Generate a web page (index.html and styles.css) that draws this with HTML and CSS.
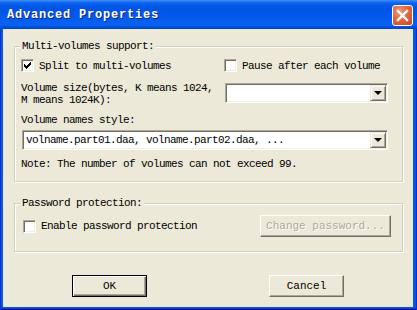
FILE: index.html
```html
<!DOCTYPE html>
<html lang="en">
<head>
    <meta charset="UTF-8">
    <title>Advanced Properties</title>
    <link rel="stylesheet" href="styles.css">
</head>
<body>
    <div class="window">
        <div class="titlebar">
            <span class="title">Advanced Properties</span>
            <span class="close">
                <svg width="19" height="19" viewBox="0 0 19 19">
                    <path d="M5 5 L14 14 M14 5 L5 14" stroke="#fff" stroke-width="2.4" stroke-linecap="square"/>
                </svg>
            </span>
        </div>
        <div class="frame">
            <div class="client">
                <div class="group group-volumes">
                    <span class="legend">Multi-volumes support:</span>
                    <div class="row-checks">
                        <label class="check">
                            <span class="box">
                                <svg width="7" height="7" viewBox="0 0 7 7" shape-rendering="crispEdges">
                                    <path d="M6 0h1v3h-1v1h-1v1h-1v1h-1v1h-1v-1h-1v-1h-1v-3h1v1h1v1h1v-1h1v-1h1z" fill="#000"/>
                                </svg>
                            </span>
                            Split to multi-volumes
                        </label>
                        <label class="check">
                            <span class="box"></span>
                            Pause after each volume
                        </label>
                    </div>
                    <div class="row-size">
                        <div class="size-label">Volume size(bytes, K means 1024,<br>M means 1024K):</div>
                        <div class="combo combo-size">
                            <span class="combo-text"></span>
                            <span class="combo-btn"><i class="arrow"></i></span>
                        </div>
                    </div>
                    <div class="names-label">Volume names style:</div>
                    <div class="combo combo-names">
                        <span class="combo-text">volname.part01.daa, volname.part02.daa, ...</span>
                        <span class="combo-btn"><i class="arrow"></i></span>
                    </div>
                    <div class="note">Note: The number of volumes can not exceed 99.</div>
                </div>

                <div class="group group-password">
                    <span class="legend">Password protection:</span>
                    <div class="row-password">
                        <label class="check">
                            <span class="box"></span>
                            Enable password protection
                        </label>
                        <button class="btn btn-disabled" disabled>Change password...</button>
                    </div>
                </div>

                <div class="actions">
                    <button class="btn btn-default">OK</button>
                    <button class="btn">Cancel</button>
                </div>
            </div>
        </div>
    </div>
</body>
</html>
```

FILE: styles.css
```css
* {
    box-sizing: border-box;
}
body {
    margin: 0;
    width: 417px;
    height: 310px;
    overflow: hidden;
    font-family: "Liberation Mono", "DejaVu Sans Mono", monospace;
    font-size: 11px;
    letter-spacing: -0.6px;
    line-height: 12px;
    color: #000;
}
.window {
    width: 417px;
    height: 310px;
    display: flex;
    flex-direction: column;
}
.titlebar {
    height: 29px;
    flex: none;
    display: flex;
    align-items: center;
    justify-content: space-between;
    padding: 1px 4px 0 7px;
    background: linear-gradient(to bottom, #3d8ff7 0, #0c62ee 3px, #0055e5 8px, #0057e8 50%, #0a62f2 85%, #0052dd 93%, #0043c8 100%);
}
.title {
    color: #fff;
    font-weight: bold;
    font-size: 12px;
    letter-spacing: 0.8px;
    text-shadow: 1px 1px #0a1f8a;
}
.close {
    width: 21px;
    height: 21px;
    border: 1px solid #fff;
    border-radius: 3px;
    background: radial-gradient(circle at 35% 30%, #ec9a78 0, #e06a43 45%, #c8421b 100%);
    display: flex;
    align-items: center;
    justify-content: center;
}
.frame {
    flex: 1;
    display: flex;
    padding: 0 4px 3px 3px;
    background: #0655e8;
    box-shadow: inset 1px 0 #0733c9, inset -1px 0 #0733c9, inset 0 -1px #00138c, inset 0 -2px #0a3ed0;
}
.client {
    flex: 1;
    background: #ece9d8;
    padding: 17px 10px 0 11px;
    display: flex;
    flex-direction: column;
}
.group {
    position: relative;
    border: 1px solid #d0d0bf;
    box-shadow: inset 1px 1px #fff, 1px 1px #fff;
}
.legend {
    position: absolute;
    top: -7px;
    left: 5px;
    padding: 0 2px;
    background: #ece9d8;
}
.group-volumes {
    padding: 12px 13px 11px 6px;
}
.row-checks {
    display: grid;
    grid-template-columns: 203px auto;
}
.check {
    display: flex;
    align-items: center;
    gap: 5px;
    height: 13px;
}
.box {
    width: 13px;
    height: 13px;
    flex: none;
    background: #fff;
    border: 1px solid;
    border-color: #aca899 #fff #fff #aca899;
    box-shadow: inset 1px 1px #716f64, inset -1px -1px #f1efe2;
    display: flex;
    align-items: center;
    justify-content: center;
}
.row-size {
    display: flex;
    margin-top: 10px;
}
.size-label {
    width: 204px;
}
.combo {
    height: 20px;
    display: flex;
    align-items: center;
    background: #fff;
    border: 1px solid;
    border-color: #aca899 #fff #fff #aca899;
    box-shadow: inset 1px 1px #716f64, inset -1px -1px #f1efe2;
    padding: 1px;
}
.combo-size {
    margin-top: 1px;
    width: 163px;
}
.combo-names {
    margin: 4px 0 0 1px;
    width: 366px;
}
.combo-text {
    flex: 1;
    padding-left: 2px;
    white-space: pre;
}
.combo-btn {
    width: 16px;
    height: 16px;
    background: #ece9d8;
    border: 1px solid;
    border-color: #ece9d8 #716f64 #716f64 #ece9d8;
    box-shadow: inset 1px 1px #fff, inset -1px -1px #aca899;
    display: flex;
    align-items: center;
    justify-content: center;
}
.arrow {
    width: 0;
    height: 0;
    border-left: 4px solid transparent;
    border-right: 4px solid transparent;
    border-top: 4px solid #000;
}
.names-label {
    margin-top: 8px;
}
.note {
    margin-top: 8px;
}
.group-password {
    margin-top: 21px;
    padding: 11px 11px 14px 8px;
}
.row-password {
    display: flex;
    align-items: center;
    justify-content: space-between;
    height: 22px;
}
.btn {
    height: 22px;
    width: 75px;
    padding: 0;
    font: inherit;
    color: #000;
    background: #ece9d8;
    border: 1px solid;
    border-color: #fff #716f64 #716f64 #fff;
    box-shadow: inset -1px -1px #aca899;
}
.btn-default {
    border-color: #000;
    box-shadow: inset 1px 1px #fff, inset -1px -1px #716f64, inset -2px -2px #aca899;
}
.btn-disabled {
    width: 131px;
    color: #aca899;
    text-shadow: 1px 1px #fff;
}
.actions {
    display: flex;
    gap: 122px;
    margin-top: 23px;
    padding-left: 58px;
}
```
